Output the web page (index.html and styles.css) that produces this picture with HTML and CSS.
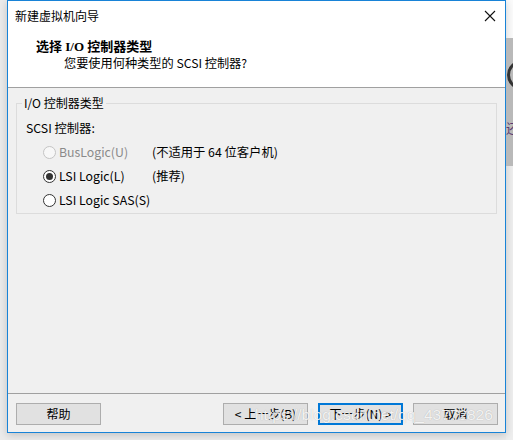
FILE: index.html
```html
<!DOCTYPE html>
<html lang="zh-CN">
<head>
<meta charset="utf-8">
<title>新建虚拟机向导</title>
<link rel="stylesheet" href="styles.css">
</head>
<body>
<div class="screen">
  <div class="dialog">
    <div class="titlebar">
      <span class="title">新建虚拟机向导</span>
      <svg class="close" width="12" height="12" viewBox="0 0 12 12"><path d="M1 1 L11 11 M11 1 L1 11" stroke="#111" stroke-width="1.1" fill="none"/></svg>
    </div>
    <div class="header">
      <div class="heading">选择 I/O 控制器类型</div>
      <div class="subheading">您要使用何种类型的 SCSI 控制器?</div>
    </div>
    <div class="content">
      <fieldset class="group">
        <legend>I/O 控制器类型</legend>
        <div class="group-body">
          <div class="row label">SCSI 控制器:</div>
          <div class="row option disabled">
            <span class="radio"></span><span class="opt-text">BusLogic(U)</span><span class="note">(不适用于 64 位客户机)</span>
          </div>
          <div class="row option">
            <span class="radio checked"></span><span class="opt-text">LSI Logic(L)</span><span class="note">(推荐)</span>
          </div>
          <div class="row option">
            <span class="radio"></span><span class="opt-text">LSI Logic SAS(S)</span>
          </div>
        </div>
      </fieldset>
    </div>
    <div class="footer">
      <button class="btn">帮助</button>
      <div class="nav">
        <button class="btn">&lt; 上一步(B)</button>
        <button class="btn focused">下一步(N) &gt;</button>
        <button class="btn">取消</button>
      </div>
    </div>
    <div class="watermark">https://blog.csdn.net/qq_43772826</div>
  </div>
  <div class="side">
    <div class="side-top"></div>
    <div class="side-gray"><span class="side-ring"></span><span class="side-char">还</span></div>
    <div class="side-rest"></div>
  </div>
</div>
</body>
</html>
```

FILE: styles.css
```css
* { box-sizing: border-box; }
html, body { margin: 0; padding: 0; }
body {
  width: 513px;
  height: 440px;
  overflow: hidden;
  background: #ebebeb;
  font-family: "Noto Sans CJK SC", "Noto Sans", sans-serif;
  font-size: 12px;
  color: #000;
}
.screen {
  display: flex;
  height: 440px;
  padding-left: 7px;
}
.dialog {
  position: relative;
  width: 499px;
  height: 433px;
  border: 1px solid #1883d7;
  background: #f0f0f0;
  display: flex;
  flex-direction: column;
  box-shadow: 0 2px 8px rgba(0,0,0,0.18);
}
.titlebar {
  height: 30px;
  background: #fff;
  display: flex;
  align-items: center;
  justify-content: space-between;
  padding: 0 9px 0 7px;
  line-height: 16px;
}
.title { font-size: 12px; }
.close { display: block; }
.header {
  height: 57px;
  background: #fff;
  border-bottom: 1px solid #a0a0a0;
  padding-top: 8px;
}
.heading {
  padding-left: 28px;
  font-family: "Liberation Serif", "Noto Sans CJK SC", serif;
  font-weight: bold;
  font-size: 13px;
  line-height: 16px;
}
.subheading {
  padding-left: 56px;
  line-height: 16px;
  font-size: 12.2px;
}
.content {
  flex: 1;
  padding: 7px 8px 0 8px;
}
.group {
  margin: 0;
  padding: 0 0 1px 5px;
  border: 1px solid #dcdcdc;
  min-width: 0;
}
.group legend {
  padding: 0 2px;
  line-height: 16px;
  font-size: 12px;
}
.group-body {
  padding: 5px 0 0 4px;
}
.row {
  height: 24px;
  display: flex;
  align-items: center;
  line-height: 16px;
  font-size: 12.3px;
}
.option { padding-left: 17px; }
.radio {
  width: 13px;
  height: 13px;
  border: 1px solid #333;
  border-radius: 50%;
  background: #fff;
  display: flex;
  align-items: center;
  justify-content: center;
  flex: none;
}
.radio.checked::after {
  content: "";
  width: 7px;
  height: 7px;
  border-radius: 50%;
  background: #333;
}
.opt-text {
  margin-left: 3px;
  width: 93px;
  white-space: nowrap;
}
.note { white-space: nowrap; }
.disabled .radio { border-color: #c4c4c4; background: #f7f7f7; }
.disabled .opt-text { color: #8a8a8a; }
.footer {
  height: 39px;
  border-top: 1px solid #a0a0a0;
  display: flex;
  justify-content: space-between;
  padding: 9px 7px 0 8px;
}
.nav { display: flex; gap: 10px; }
.btn {
  width: 85px;
  height: 22px;
  margin: 0;
  padding: 0;
  background: #e1e1e1;
  border: 1px solid #adadad;
  font-family: "Noto Sans CJK SC", "Noto Sans", sans-serif;
  font-size: 12px;
  line-height: 18px;
  color: #000;
}
.btn.focused {
  border: 2px solid #0078d7;
}
.watermark {
  position: absolute;
  left: 247px;
  top: 405px;
  font-family: "Liberation Sans", sans-serif;
  font-size: 15.5px;
  color: rgba(255,255,255,0.85);
  text-shadow: 0 0 1px rgba(0,0,0,0.25);
  white-space: nowrap;
  pointer-events: none;
}
.side {
  flex: 1;
  display: flex;
  flex-direction: column;
  overflow: hidden;
}
.side-top { height: 38px; background: #fbfbfb; }
.side-gray {
  position: relative;
  height: 128px;
  background: #b9b9b9;
  overflow: hidden;
}
.side-ring {
  position: absolute;
  left: 1px;
  top: 22px;
  width: 30px;
  height: 30px;
  border: 3px solid #333;
  border-radius: 50%;
}
.side-char {
  position: absolute;
  left: 0;
  top: 80px;
  font-size: 13px;
  color: #5a3a70;
}
.side-rest { flex: 1; background: #eeeeee; }
```
